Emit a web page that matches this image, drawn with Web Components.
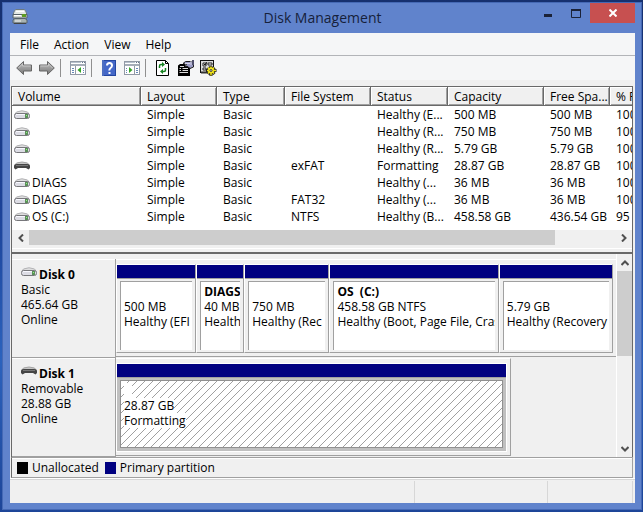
<!DOCTYPE html>
<html lang="en">
<head>
<meta charset="utf-8">
<meta name="viewport" content="width=device-width, initial-scale=1">
<title>Disk Management</title>
<style>
  * { box-sizing: border-box; }
  body {
    margin: 0; padding: 2px 1px 2px 2px; min-height: 100vh;
    display: flex; flex-direction: column;
    background: linear-gradient(180deg, #16306f 0, #1b4197 40%, #2b62bd 70%, #1d4598 100%);
    font: 12px/15px "Open Sans", "Noto Sans", sans-serif; color: #000;
  }
</style>
</head>
<body>

<dm-window caption="Disk Management">
  <dm-menu slot="menu" items="File,Action,View,Help"></dm-menu>
  <dm-toolbar slot="toolbar"></dm-toolbar>
  <dm-volumes></dm-volumes>
  <dm-disks>
    <dm-disk name="Disk 0" icon="drive" kind="Basic" size="465.64 GB" state="Online" columns="80fr 48fr 85fr 169fr 114fr">
      <dm-partition size="500 MB" state="Healthy (EFI"></dm-partition>
      <dm-partition name="DIAGS" size="40 MB" state="Health"></dm-partition>
      <dm-partition size="750 MB" state="Healthy (Rec"></dm-partition>
      <dm-partition name="OS&nbsp; (C:)" size="458.58 GB NTFS" state="Healthy (Boot, Page File, Cras"></dm-partition>
      <dm-partition size="5.79 GB" state="Healthy (Recovery"></dm-partition>
    </dm-disk>
    <dm-disk name="Disk 1" icon="removable" kind="Removable" size="28.88 GB" state="Online" columns="1fr" part>
      <dm-partition size="28.87 GB" state="Formatting" selected></dm-partition>
    </dm-disk>
  </dm-disks>
  <dm-legend slot="footer"></dm-legend>
  <dm-status slot="footer"></dm-status>
</dm-window>

<script>
const ICONS = {
  app: `<svg width="16" height="16" viewBox="0 0 16 16">
    <path d="M2.500 1.500L4 .5H12L13.500 1.500L15 6H1Z" fill="#e4e9e5" stroke="#6d7a80"/><path d="M4 2.500H12" stroke="#fff"/>
    <path d="M1 5.500H15V9H1Z" fill="#d3d8d3" stroke="#56626b"/><rect x="10" y="5" width="4" height="3" fill="#5d9b22"/><path d="M2 6.500H9" stroke="#fff"/>
    <path d="M3 9.500H13L15 11V14H1V11Z" fill="#a9b3b2" stroke="#56626b"/><path d="M3 12H9" stroke="#f4f4f4"/><path d="M2 14.500H14" stroke="#444"/></svg>`,
  drive: `<svg width="16" height="10" viewBox="0 0 16 10">
    <path d="M2.500 2Q8 -.5 13.500 2L15 4H1Z" fill="#dededf" stroke="#b3b3b5"/>
    <rect x=".5" y="3.500" width="15" height="5" rx="2" fill="#dcdce4" stroke="#77777b"/>
    <path d="M2 4.500H11" stroke="#f8f8ff"/><rect x="11" y="4" width="3" height="4" fill="#5b8e59"/><rect x="12" y="5" width="1" height="1" fill="#91f283"/></svg>`,
  removable: `<svg width="16" height="10" viewBox="0 0 16 10">
    <path d="M2.500 2Q8 0 13.500 2L15 4H1Z" fill="#c6c6c6" stroke="#a4a4a4"/>
    <path d="M0 5Q0 3 3 3H13Q16 3 16 5V7L14.500 8.500L12 7H4L1.500 8.500L0 7Z" fill="#454545"/><path d="M2 4.500H14" stroke="#777"/></svg>`,
  back: `<svg width="16" height="16" viewBox="0 0 16 16"><defs><linearGradient id="g" x1="0" y1="0" x2="0" y2="1"><stop stop-color="#c2c2c2"/><stop offset="1" stop-color="#777"/></linearGradient></defs>
    <path d="M.7 8L7.500 1.500V5H15.500V11H7.500V14.500Z" fill="url(#g)" stroke="#666"/><path d="M2.500 8L6.500 4V6H14.500" fill="none" stroke="#c4c4c4"/></svg>`,
  forward: `<svg width="16" height="16" viewBox="0 0 16 16"><defs><linearGradient id="h" x1="0" y1="0" x2="0" y2="1"><stop stop-color="#c2c2c2"/><stop offset="1" stop-color="#777"/></linearGradient></defs>
    <path d="M15.300 8L8.500 1.500V5H.5V11H8.500V14.500Z" fill="url(#h)" stroke="#666"/><path d="M1.500 6H9.500V4L13.500 8" fill="none" stroke="#c4c4c4"/></svg>`,
  tree: `<svg width="16" height="14" viewBox="0 0 16 14"><rect x=".5" y=".5" width="15" height="13" fill="#fff" stroke="#929aa6"/>
    <path d="M1 1.500H11" stroke="#b8c1ce"/><path d="M12 1.500H15" stroke="#65748b" stroke-dasharray="1 1"/><path d="M1 4H15" stroke="#a5adb8" stroke-width="2"/>
    <path d="M5.500 5V13" stroke="#929aa6"/><path d="M2 7.500H4M2 9.500H4M2 11.500H4M13 7.500H14M13 9.500H14M13 11.500H14" stroke="#6789b8"/>
    <path d="M11 6V12L7.500 9Z" fill="#35a329"/></svg>`,
  help: `<svg width="14" height="16" viewBox="0 0 14 16"><rect width="14" height="16" fill="#2446a0"/><rect x="2" y="1" width="11" height="14" fill="#4468c8"/><path d="M1 0V16" stroke="#7998e0"/>
    <path d="M5 5.500Q5 3 7.500 3T10 5.500Q10 7 8.500 8T7.500 10.500M7.500 12V14" fill="none" stroke="#fff" stroke-width="2"/></svg>`,
  pane: `<svg width="16" height="14" viewBox="0 0 16 14"><rect x=".5" y=".5" width="15" height="13" fill="#fff" stroke="#929aa6"/>
    <path d="M1 1.500H11" stroke="#b8c1ce"/><path d="M12 1.500H15" stroke="#65748b" stroke-dasharray="1 1"/><path d="M1 4H15" stroke="#a5adb8" stroke-width="2"/>
    <path d="M10.500 5V13" stroke="#929aa6"/><path d="M2 7.500H3M2 9.500H3M2 11.500H3M12 7.500H14M12 9.500H14M12 11.500H14" stroke="#6789b8"/>
    <path d="M5 6V12L8.500 9Z" fill="#35a329"/></svg>`,
  refresh: `<svg width="13" height="16" viewBox="0 0 13 16"><path d="M.5.5H9.500L12.500 3.500V15.500H.5Z" fill="#fff" stroke="#000"/><path d="M9.500.5V3.500H12.500" fill="none" stroke="#000"/>
    <path d="M3.500 8V6Q3.500 4.500 5 4.500H7M9.500 8V10Q9.500 11.500 8 11.500H6" fill="none" stroke="#168321" stroke-width="1.500"/><path d="M6 2L9 4.500L6 7ZM7 9V14L4 11.500Z" fill="#168321"/></svg>`,
  props: `<svg width="16" height="16" viewBox="0 0 16 16"><path d="M0 5.500L2 4H7V7H12V16H0Z" fill="#000"/><path d="M1.500 8.500H3M4.500 8.500H10M1.500 10.500H3M4.500 10.500H10M1.500 12.500H10M2 6.500H6" stroke="#dcdcdc"/>
    <path d="M5 3.500L7.500 1.500H13L15.500 2.500V7L12 8.500L10 6.500H7L8.500 4.500Z" fill="#9a9ac4" stroke="#222"/><path d="M7 3.500H12M13 1V5" stroke="#d6d6e8"/><path d="M14 0H16V5H14Z" fill="#50506e"/></svg>`,
  settings: `<svg width="17" height="17" viewBox="0 0 17 17"><rect x=".5" y=".5" width="13" height="12" fill="#dcdcdc" stroke="#111"/>
    <path d="M1 12.500H9" stroke="#333" stroke-width="2"/><path d="M3 3H6V6H3ZM3 8H6V10H3ZM8 3H12V5H8Z" fill="#fff" stroke="#222"/><path d="M4 4L5 5L7 2" fill="none" stroke="#111"/>
    <path d="M11 6V16M6 10.500H16.500M8 7.500L14.500 14M14.500 7.500L8 14" stroke="#222" stroke-width="3"/><path d="M11 6.500V15.500M7 10.500H16M8 7.500L14 13.500M14 7.500L8 13.500" stroke="#f2e51b" stroke-width="1.500"/>
    <circle cx="11" cy="10.500" r="3" fill="#f2e51b"/><circle cx="11" cy="10.500" r="1" fill="#fff" stroke="#333"/></svg>`
};

const BASE = `
  *, :host { box-sizing: border-box; }
  button { font: inherit; color: inherit; border: 0; background: none; padding: 0; margin: 0; }
  svg { display: block; flex: none; }
`;

class DmElement extends HTMLElement {
  constructor() {
    super();
    this.attachShadow({ mode: 'open' });
  }
  connectedCallback() {
    this.shadowRoot.innerHTML = `<style>${BASE}${this.styles()}</style>${this.markup()}`;
  }
  attr(name) { return this.getAttribute(name) || ''; }
}

class DmWindow extends DmElement {
  styles() {
    return `
      :host { display: flex; flex-direction: column; flex: 1; min-width: 0; padding: 0 6px 6px 7px; background: #6083cc; border: 1px solid #4569b5; }
      header { display: grid; grid-template-columns: 101px 1fr 101px; height: 30px; flex: none; align-items: start; }
      .app { padding: 6px 0 0 2px; }
      h1 { margin: 0; font-size: 14px; line-height: 30px; font-weight: 400; text-align: center; color: #16213b; }
      nav { display: flex; justify-content: flex-end; }
      nav button { display: grid; place-items: center; width: 28px; height: 20px; }
      nav .close { width: 45px; background: #c75050; }
      main { display: flex; flex-direction: column; flex: 1; background: #f0f0f0; }
      .panes { display: flex; flex-direction: column; flex: 1; margin: 6px 2px 0 1px; border: solid #696969; border-width: 1px 1px 0; }
      ::slotted(dm-disks) { flex: 1; }
    `;
  }
  markup() {
    return `
      <header>
        <div class="app">${ICONS.app}</div>
        <h1>${this.attr('caption')}</h1>
        <nav>
          <button aria-label="Minimize"><svg width="9" height="9" viewBox="0 0 9 9"><path d="M0 6.500H8" stroke="#1b2238" stroke-width="3"/></svg></button>
          <button aria-label="Maximize"><svg width="10" height="9" viewBox="0 0 10 9"><path d="M.5 1V8.500H9.500V1" fill="none" stroke="#1b2238"/><path d="M0 1H10" stroke="#1b2238" stroke-width="2"/></svg></button>
          <button class="close" aria-label="Close"><svg width="8" height="8" viewBox="0 0 8 8"><path d="M.5.5L7.500 7.500M7.500.5L.5 7.500" stroke="#fff" stroke-width="2"/></svg></button>
        </nav>
      </header>
      <main>
        <slot name="menu"></slot>
        <slot name="toolbar"></slot>
        <div class="panes"><slot></slot></div>
        <slot name="footer"></slot>
      </main>`;
  }
}

class DmMenu extends DmElement {
  styles() {
    return `
      :host { display: flex; gap: 15px; padding: 0 10px; height: 23px; background: #f5f6f7; border-bottom: 1px solid #b2b4b8; }
    `;
  }
  markup() {
    return this.attr('items').split(',').map(t => `<button>${t}</button>`).join('');
  }
}

class DmToolbar extends DmElement {
  styles() {
    return `
      :host { display: flex; align-items: center; padding-left: 2px; height: 24px; background: #f5f6f7; }
      button { display: grid; place-items: center; width: 23px; height: 22px; }
      i { width: 1px; height: 18px; margin: 0 5px 0 2px; background: #909090; }
    `;
  }
  markup() {
    const items = [['back', 'Back'], ['forward', 'Forward'], 0, ['tree', 'Show console tree'], 0,
      ['help', 'Help'], ['pane', 'Show action pane'], 0, ['refresh', 'Refresh'], ['props', 'Properties'], ['settings', 'Settings']];
    return items.map(it => it ? `<button aria-label="${it[1]}">${ICONS[it[0]]}</button>` : '<i></i>').join('');
  }
}

class DmScrollbar extends DmElement {
  styles() {
    return `
      :host { display: flex; height: 15px; background: #f0f0f0; }
      :host([vertical]) { flex-direction: column; width: 16px; height: auto; border-left: 1px solid #fff; }
      button { display: grid; place-items: center; flex: none; width: 17px; height: 15px; }
      :host([vertical]) button { width: 15px; height: 17px; }
      .track { display: flex; flex: 1; flex-direction: inherit; }
      .thumb { flex: var(--thumb); background: #cdcdcd; }
      .rest { flex: var(--rest); }
    `;
  }
  markup() {
    const v = this.hasAttribute('vertical');
    const arrow = (d, label) => `<button aria-label="${label}"><svg width="8" height="8" viewBox="0 0 8 8"><path d="${d}" fill="none" stroke="#505050" stroke-width="2"/></svg></button>`;
    return `
      ${v ? arrow('M.5 6L4 2.500L7.500 6', 'Up') : arrow('M6 .5L2.500 4L6 7.500', 'Left')}
      <div class="track"><div class="thumb"></div><div class="rest"></div></div>
      ${v ? arrow('M.5 2L4 5.500L7.500 2', 'Down') : arrow('M2 .5L5.500 4L2 7.500', 'Right')}`;
  }
}

class DmVolumes extends DmElement {
  styles() {
    return `
      :host { display: block; border-bottom: 2px solid #696969; }
      .view { overflow: hidden; background: #fff; padding-bottom: 5px; }
      table { width: 100%; table-layout: fixed; border-collapse: separate; border-spacing: 0; }
      th, td { padding: 0 0 0 6px; font-weight: 400; text-align: left; white-space: nowrap; overflow: hidden; }
      th { height: 19px; background: #f0f0f0; border: solid #696969; border-width: 0 1px 1px 0; box-shadow: inset 1px 1px #fff, inset -1px -1px #a0a0a0; }
      th:last-child { border-right: 0; box-shadow: inset 1px 1px #fff, inset 0 -1px #a0a0a0; }
      td { height: 17px; line-height: 17px; }
      td:first-child { padding-left: 2px; }
      .name { display: flex; align-items: center; gap: 2px; }
      dm-scrollbar { --thumb: 527; --rest: 60; }
      footer { height: 7px; background: linear-gradient(#f0f0f0 3px, #fff 3px 4px, #f0f0f0 4px); }
    `;
  }
  markup() {
    // last column takes what is left of the view
    const widths = [129, 76, 68, 86, 77, 96, 66];
    const heads = ['Volume', 'Layout', 'Type', 'File System', 'Status', 'Capacity', 'Free Spa...', '% F'];
    const rows = [
      ['', '', 'Healthy (E...', '500 MB', '500 MB', '100'],
      ['', '', 'Healthy (R...', '750 MB', '750 MB', '100'],
      ['', '', 'Healthy (R...', '5.79 GB', '5.79 GB', '100'],
      ['', 'exFAT', 'Formatting', '28.87 GB', '28.87 GB', '100'],
      ['DIAGS', '', 'Healthy (...', '36 MB', '36 MB', '100'],
      ['DIAGS', 'FAT32', 'Healthy (...', '36 MB', '36 MB', '100'],
      ['OS (C:)', 'NTFS', 'Healthy (B...', '458.58 GB', '436.54 GB', '95']
    ];
    return `
      <div class="view"><table>
        <colgroup>${widths.map(w => `<col style="width:${w}px">`).join('')}<col></colgroup>
        <thead><tr>${heads.map(h => `<th>${h}</th>`).join('')}</tr></thead>
        <tbody>${rows.map(([name, ...rest]) => `<tr>
          <td><div class="name">${ICONS[rest[0] === 'exFAT' ? 'removable' : 'drive']}${name}</div></td>
          <td>Simple</td><td>Basic</td>${rest.map(c => `<td>${c}</td>`).join('')}</tr>`).join('')}</tbody>
      </table></div>
      <dm-scrollbar></dm-scrollbar>
      <footer></footer>`;
  }
}

class DmDisks extends DmElement {
  styles() {
    return `
      :host { display: flex; background: #f0f0f0; }
      .list { flex: 1; min-width: 0; padding-top: 5px; }
      dm-scrollbar { --thumb: 85; --rest: 84; }
    `;
  }
  markup() {
    return `<div class="list"><slot></slot></div><dm-scrollbar vertical></dm-scrollbar>`;
  }
}

class DmDisk extends DmElement {
  styles() {
    return `
      :host { display: grid; grid-template-columns: 104px 1fr; height: 99px; }
      .info { border: solid #a0a0a0; border-width: 0 1px 1px 0; padding: 8px 0 0 9px; box-shadow: inset 0 1px #fff; }
      .info div { height: 15px; }
      .name { display: flex; gap: 2px; font-weight: 700; }
      .map { display: grid; grid-template-columns: ${this.attr('columns')}; border-top: 1px solid #fff; border-bottom: 1px solid #a0a0a0; padding: 4px 3px 3px 0; margin-bottom: 1px; }
      :host([part]) .map { width: 79%; border-right: 1px solid #a0a0a0; }
    `;
  }
  markup() {
    return `
      <div class="info">
        <div class="name">${ICONS[this.attr('icon')]}${this.attr('name')}</div>
        <div>${this.attr('kind')}</div><div>${this.attr('size')}</div><div>${this.attr('state')}</div>
      </div>
      <div class="map"><slot></slot></div>`;
  }
}

class DmPartition extends DmElement {
  styles() {
    return `
      :host { display: flex; flex-direction: column; min-width: 0; border: 1px solid #a0a0a0; border-left-color: #fff; border-top-color: #fff; }
      .bar { height: 14px; background: #000080; border-bottom: 1px solid #a0a0a0; flex: none; }
      .body { flex: 1; margin: 2px 3px; padding: 2px 0 2px 3px; background: #fff; border: solid #a0a0a0; border-width: 1px 0 0 1px; overflow: hidden; white-space: nowrap; }
      .text div { height: 15px; }
      .name { font-weight: 700; }
      :host([selected]) { background: #c0c0c0; border-color: #fff; }
      :host([selected]) .body {
        margin: 2px 3px 3px; border: 1px solid #909090;
        background: #fff linear-gradient(135deg, transparent 46%, #a0a0a0 47% 53%, transparent 54%) 0 0 / 8px 8px;
      }
      :host([selected]) .text div { width: max-content; min-width: 8px; background: #fff; }
    `;
  }
  markup() {
    return `
      <div class="bar"></div>
      <div class="body"><div class="text">
        <div class="name">${this.attr('name')}</div>
        <div>${this.attr('size')}</div>
        <div>${this.attr('state')}</div>
      </div></div>`;
  }
}

class DmLegend extends DmElement {
  styles() {
    return `
      :host { display: flex; align-items: center; gap: 6px; height: 21px; margin: 0 2px 0 1px; padding-left: 5px;
        border: 1px solid #a0a0a0; border-left-color: #696969; box-shadow: inset 0 1px #fff; }
      span { display: flex; align-items: center; gap: 4px; }
      i { width: 11px; height: 12px; background: var(--c); }
    `;
  }
  markup() {
    return `<span><i style="--c:#000"></i>Unallocated</span><span><i style="--c:#000080"></i>Primary partition</span>`;
  }
}

class DmStatus extends DmElement {
  styles() {
    return `
      :host { display: grid; grid-template-columns: 1fr 133px 85px 2px; height: 25px; padding-top: 3px; box-shadow: inset 0 1px #fff, inset 0 2px #d7d7d7; }
      div { border-right: 1px solid #d7d7d7; }
      div:last-child { border: 0; }
    `;
  }
  markup() { return '<div></div><div></div><div></div><div></div>'; }
}

customElements.define('dm-window', DmWindow);
customElements.define('dm-menu', DmMenu);
customElements.define('dm-toolbar', DmToolbar);
customElements.define('dm-scrollbar', DmScrollbar);
customElements.define('dm-volumes', DmVolumes);
customElements.define('dm-disks', DmDisks);
customElements.define('dm-disk', DmDisk);
customElements.define('dm-partition', DmPartition);
customElements.define('dm-legend', DmLegend);
customElements.define('dm-status', DmStatus);
</script>
</body>
</html>
